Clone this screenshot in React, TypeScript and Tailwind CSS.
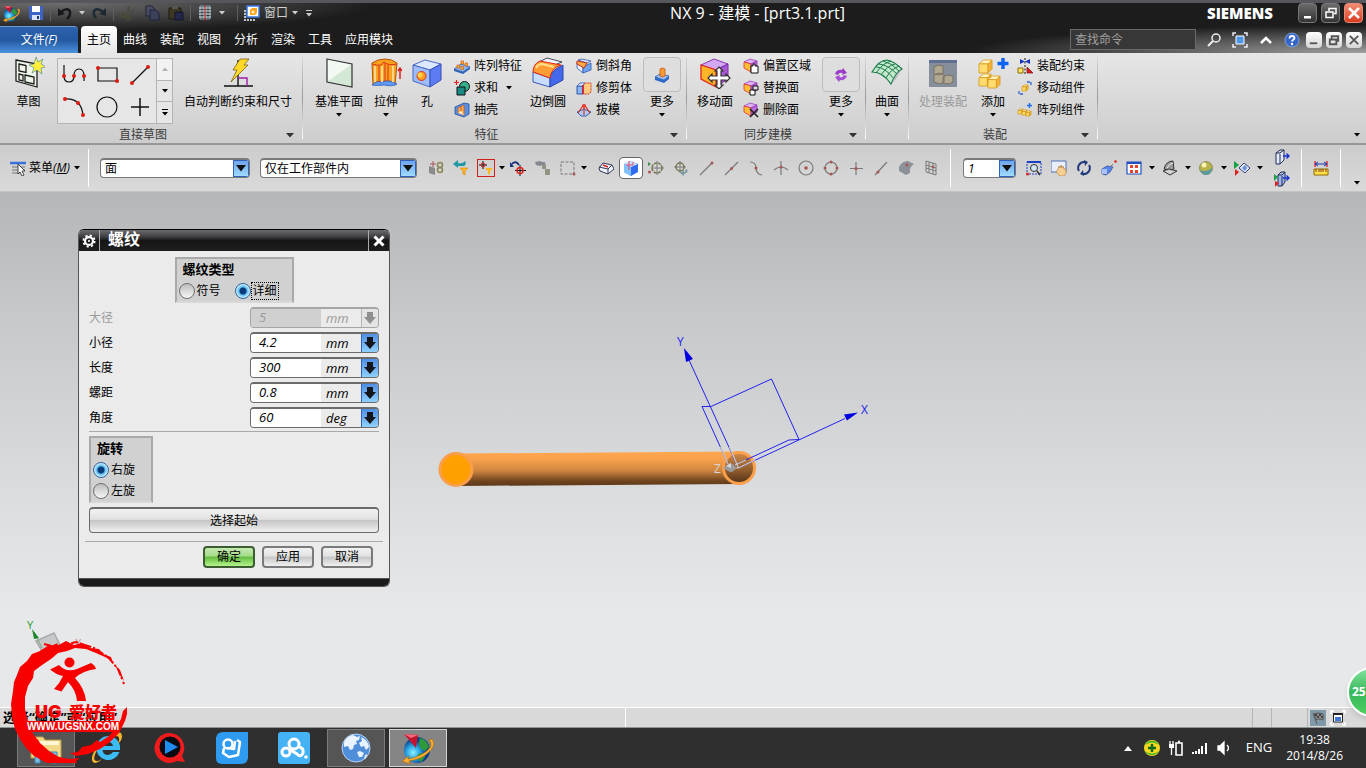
import React, { useState } from 'react';

type IconProps = { children: React.ReactNode; size?: number; box?: number; className?: string };

const Icon = ({ children, size = 16, box = 16, className = '' }: IconProps) => (
  <svg width={size} height={size} viewBox={`0 0 ${box} ${box}`} fill="none" className={`shrink-0 ${className}`} aria-hidden="true">
    {children}
  </svg>
);

const Caret = ({ className = 'text-black' }: { className?: string }) => (
  <svg width="6" height="4" viewBox="0 0 6 4" className={`shrink-0 ${className}`} aria-hidden="true">
    <path d="M0 0h6L3 3.5z" fill="currentColor" />
  </svg>
);

const FooterCaret = () => (
  <svg width="8" height="5" viewBox="0 0 8 5" className="shrink-0" aria-hidden="true">
    <path d="M0 0h8L4 4.5z" fill="#333" />
  </svg>
);

/* ---------- shared drawings ---------- */

const NxLogo = ({ size }: { size: number }) => (
  <Icon size={size} box={32}>
    <defs>
      <radialGradient id="nxGlobe" cx="0.35" cy="0.6">
        <stop offset="0" stopColor="#8ff0ff" />
        <stop offset="0.5" stopColor="#2aa6e4" />
        <stop offset="1" stopColor="#0a3e8c" />
      </radialGradient>
    </defs>
    <circle cx="15" cy="18" r="13" fill="url(#nxGlobe)" />
    <path d="M18 6q7 2 9 9l-4 4-5-3-1-5zM16 22l5-1 2 4-4 5-3-3z" fill="#2f9a3c" />
    <path d="M27 8q6 6-5 13-8 5-16 6l1-3-7 5 8 3-1-3q13-2 19-8 9-8 4-14z" fill="#fbb034" stroke="#a85f00" strokeWidth="0.6" />
    <path d="M2 2l14 1-2 13z" fill="#c3142d" />
    <path d="M2 2l14 1-7 3z" fill="#f46a7c" />
  </Icon>
);

const FaceCube = ({ extra }: { extra: React.ReactNode }) => (
  <Icon>
    <path d="M1 4l6-3 7 2-6 3z" fill="#dcb4f4" stroke="#9a3fc0" strokeWidth="0.8" />
    <path d="M1 4l7 2v8l-7-4z" fill="#ffbe33" stroke="#e0302c" strokeWidth="0.8" />
    <path d="M8 6l6-3v7l-6 4z" fill="#b868dc" stroke="#8a35b0" strokeWidth="0.8" />
    {extra}
  </Icon>
);

const GoldCube = ({ x, y, s }: { x: number; y: number; s: number }) => (
  <g stroke="#d59a1c" strokeWidth="0.8" strokeLinejoin="round">
    <path d={`M${x} ${y + s * 0.3}l${s * 0.35} ${-s * 0.3}h${s * 0.65}l${-s * 0.3} ${s * 0.3}z`} fill="#fff2bd" />
    <path d={`M${x} ${y + s * 0.3}h${s * 0.7}v${s * 0.7}h${-s * 0.7}z`} fill="#ffdc70" />
    <path d={`M${x + s * 0.7} ${y + s * 0.3}l${s * 0.3} ${-s * 0.3}v${s * 0.7}l${-s * 0.3} ${s * 0.3}z`} fill="#f2b23c" />
  </g>
);

const RedDot = ({ x, y, r = 2 }: { x: number; y: number; r?: number }) => <circle cx={x} cy={y} r={r} fill="#dd1c14" />;

/* ---------- title bar ---------- */

const BarLine = () => <span className="mx-1.5 h-4 w-px shrink-0 bg-[#5e5e5e]" />;

const QuickButton = ({ label, children }: { label: string; children: React.ReactNode }) => (
  <button type="button" aria-label={label} className="flex h-5 w-4 items-center justify-center">
    {children}
  </button>
);

const QuickAccess = () => (
  <div className="flex items-center pl-[3px] text-[#cfcfcf]">
    <NxLogo size={17} />
    <div className="ml-2 flex items-center">
      <QuickButton label="保存">
        <Icon>
          <path d="M1 1h14v14H3l-2-2z" fill="#3d63c4" />
          <path d="M4 1h8v6H4z" fill="#fff" />
          <path d="M4 10h8v5H4z" fill="#d9e2f8" />
          <path d="M9 11h2v3H9z" fill="#22386f" />
        </Icon>
      </QuickButton>
      <BarLine />
      <QuickButton label="撤消">
        <Icon>
          <path d="M4 7q5-4 8-2 3 4-2 9" stroke="#16181d" strokeWidth="2.500" />
          <path d="M1 3v8l7-2z" fill="#16181d" />
        </Icon>
      </QuickButton>
      <span className="mx-1.5"><Caret className="text-[#cfcfcf]" /></span>
      <QuickButton label="重做">
        <Icon>
          <path d="M12 7q-5-4-8-2-3 3 1 8" stroke="#1d2a33" strokeWidth="2.500" />
          <path d="M15 3v8l-7-2z" fill="#1d2a33" />
        </Icon>
      </QuickButton>
      <BarLine />
      <QuickButton label="剪切">
        <Icon>
          <path d="M9 1L7 11M15 5L3 10" stroke="#4b4a44" strokeWidth="2" />
          <circle cx="3" cy="10" r="2" stroke="#4b4a35" strokeWidth="1.5" />
          <circle cx="8" cy="13" r="2" stroke="#4b4a35" strokeWidth="1.5" />
        </Icon>
      </QuickButton>
      <span className="w-2" />
      <QuickButton label="复制">
        <Icon>
          <path d="M2 1h6l2 2v8H2z" fill="#4a4e5e" stroke="#20233a" />
          <path d="M6 5h6l3 3v7H6z" fill="#3c415a" stroke="#1d2040" />
        </Icon>
      </QuickButton>
      <span className="w-2" />
      <QuickButton label="粘贴">
        <Icon>
          <path d="M1 3h12v11H1z" fill="#3c3720" stroke="#1b1a12" />
          <path d="M4 1h6v3H4z" fill="#555" />
          <path d="M7 7h8v8H7z" fill="#23274a" stroke="#12142c" />
        </Icon>
      </QuickButton>
      <BarLine />
      <QuickButton label="书签">
        <Icon>
          <path d="M3 1h4v13H3zM9 1h4v13H9z" stroke="#7fa3b8" />
          <path d="M2 3h12M2 6h12M2 9h12M2 12h12" stroke="#dfe9ef" strokeWidth="1.200" />
          <path d="M8 0v16" stroke="#d7261e" />
        </Icon>
      </QuickButton>
      <span className="mx-1.5"><Caret className="text-[#cfcfcf]" /></span>
      <BarLine />
      <button type="button" className="flex items-center gap-1 text-xs text-[#cfcfcf]">
        <Icon>
          <path d="M1 5v10h11" stroke="#b9c3d2" strokeWidth="2" strokeDasharray="2 1" />
          <path d="M3 1h12v11H3z" fill="#fff" stroke="#3f78e0" strokeWidth="1.5" />
          <path d="M6 5l2-2h5v5l-2 2H6z" fill="#ffa51f" />
          <circle cx="9" cy="7" r="1.5" fill="#fff2bd" />
        </Icon>
        窗口
        <Caret className="text-[#cfcfcf]" />
      </button>
      <button type="button" aria-label="自定义快速访问" className="ml-2 flex flex-col items-center gap-0.5">
        <span className="h-px w-1.5 bg-[#cfcfcf]" />
        <Caret className="text-[#cfcfcf]" />
      </button>
    </div>
  </div>
);

const WindowButtons = () => (
  <div className="flex gap-1 pr-[3px]">
    <button type="button" aria-label="最小化" className="flex h-5 w-[19px] items-center justify-center rounded-sm border border-[#777] bg-gradient-to-b from-[#6b6b6b] to-[#343434]">
      <Icon><path d="M4 11h7v2.500H4z" fill="#fff" /></Icon>
    </button>
    <button type="button" aria-label="还原" className="flex h-5 w-[19px] items-center justify-center rounded-sm border border-[#777] bg-gradient-to-b from-[#6b6b6b] to-[#343434]">
      <Icon>
        <path d="M6 6V3.500h7v5h-2" stroke="#fff" strokeWidth="1.5" />
        <path d="M3 7h7v5.500H3z" stroke="#fff" strokeWidth="1.5" />
      </Icon>
    </button>
    <button type="button" aria-label="关闭" className="flex h-5 w-[19px] items-center justify-center rounded-sm border border-[#e78b79] bg-gradient-to-b from-[#f28b73] to-[#d93a1b]">
      <Icon><path d="M3 3l10 10M13 3L3 13" stroke="#fff" strokeWidth="2.5" /></Icon>
    </button>
  </div>
);

const tabs = ['曲线', '装配', '视图', '分析', '渲染', '工具', '应用模块'];

const TabRow = () => (
  <div className="flex h-[27px] items-stretch justify-between text-xs text-white">
    <nav className="flex items-stretch">
      <button type="button" className="w-[78px] rounded-tr-sm border-t border-[#6d9bd0] bg-gradient-to-b from-[#2c62ad] via-[#2458a0] to-[#4b93de]">
        文件<i>(F)</i>
      </button>
      <button type="button" className="ml-[3px] rounded-t-sm bg-gradient-to-b from-white to-[#e6e6e6] px-1.5 text-black">主页</button>
      <div className="flex gap-[13px] pl-1.5">
        {tabs.map((tab) => (
          <button type="button" key={tab}>{tab}</button>
        ))}
      </div>
    </nav>
    <div className="flex items-center pr-1">
      <input
        aria-label="查找命令"
        placeholder="查找命令"
        className="h-[21px] w-[126px] border border-[#6a6a6a] bg-[#373737] px-1 text-xs text-white placeholder:text-[#a0a0a0]"
      />
      <div className="ml-2.5 mr-1.5 flex gap-2.5">
        <button type="button" aria-label="搜索">
          <Icon>
            <circle cx="10" cy="6" r="4" stroke="#eee" strokeWidth="1.5" />
            <path d="M7 9l-5 5" stroke="#eee" strokeWidth="2" />
          </Icon>
        </button>
        <button type="button" aria-label="全屏">
          <Icon>
            <path d="M1 4V1h3M12 1h3v3M15 12v3h-3M4 15H1v-3" stroke="#eee" strokeWidth="1.5" />
            <path d="M4 4h8v8H4z" fill="#4b97ea" stroke="#fff" />
          </Icon>
        </button>
        <button type="button" aria-label="折叠功能区">
          <Icon><path d="M3 11l5-5 5 5" stroke="#fff" strokeWidth="2.5" /></Icon>
        </button>
        <button type="button" aria-label="帮助">
          <Icon>
            <circle cx="8" cy="8" r="7" fill="#3566c8" stroke="#8fb0ec" strokeWidth="0.8" />
            <path d="M5.500 6.500q0-2.500 2.500-2.500t2.500 2q0 1-1.500 2-1 .8-1 1.500" stroke="#fff" strokeWidth="1.800" />
            <circle cx="8" cy="12" r="1.200" fill="#fff" />
          </Icon>
        </button>
      </div>
      <div className="flex gap-1">
        {[
          { label: '最小化文档', d: 'M3 11h8' },
          { label: '还原文档', d: 'M5 6V3.500h7v5h-2M3 7h7v5H3z' },
          { label: '关闭文档', d: 'M3 3l9 9M12 3l-9 9' },
        ].map((b) => (
          <button type="button" key={b.label} aria-label={b.label} className="flex h-4 w-4 items-center justify-center rounded-sm bg-gradient-to-b from-white to-[#d5d5d5]">
            <Icon size={14} box={15}><path d={b.d} stroke="#555" strokeWidth="2" /></Icon>
          </button>
        ))}
      </div>
    </div>
  </div>
);

const TitleBar = () => (
  <header className="border-t-[3px] border-[#56575b] bg-[#1c1c1c] bg-[radial-gradient(320px_28px_at_60px_0px,#6e6e6e,transparent),radial-gradient(400px_28px_at_100%_100%,#a0a0a0,transparent)]">
    <div className="flex h-[23px] items-start">
      <QuickAccess />
      <h1 className="flex-1 pr-1 text-center text-base leading-5 text-white">NX 9 - 建模 - [prt3.1.prt]</h1>
      <span className="mr-[25px] font-['Open_Sans',sans-serif] text-[15px] font-extrabold leading-[21px] text-white">SIEMENS</span>
      <WindowButtons />
    </div>
    <TabRow />
  </header>
);

/* ---------- ribbon ---------- */

const Divider = () => <div className="my-1 w-px shrink-0 bg-gradient-to-b from-[#d8d8d8] via-[#999] to-white" />;

type GroupProps = { title?: string; children: React.ReactNode; className?: string };

const Group = ({ title, children, className = '' }: GroupProps) => (
  <section className="flex flex-col">
    <div className={`flex h-[74px] items-start ${className}`}>{children}</div>
    {title && (
      <div className="flex h-4 items-center pr-2 text-xs leading-4 text-[#3c3c3c]">
        <span className="flex-1 text-center">{title}</span>
        <FooterCaret />
      </div>
    )}
  </section>
);

type BigButtonProps = { label: string; width: string; caret?: boolean; disabled?: boolean; children: React.ReactNode };

const BigButton = ({ label, width, caret, disabled, children }: BigButtonProps) => (
  <button type="button" disabled={disabled} className={`flex shrink-0 flex-col items-center pt-1 text-xs leading-4 disabled:text-[#9a9a9a] ${width}`}>
    <span className="flex h-8 items-center justify-center">{children}</span>
    <span className="mt-[5px] whitespace-nowrap">{label}</span>
    {caret && <span className="mt-[3px]"><Caret /></span>}
  </button>
);

const MoreButton = ({ children }: { children: React.ReactNode }) => (
  <button type="button" className="ml-[11px] mr-[5px] flex w-[38px] flex-col items-center pt-1 text-xs leading-4">
    <span className="flex h-[35px] w-full items-center justify-center rounded-sm border border-[#bcbcbc] bg-[#dedede]">{children}</span>
    <span className="mt-0.5">更多</span>
    <span className="mt-[3px]"><Caret /></span>
  </button>
);

type SmallItem = { label: string; icon: React.ReactNode; caret?: boolean };

const SmallColumn = ({ items, className = '' }: { items: SmallItem[]; className?: string }) => (
  <div className={`flex flex-col pt-0.5 ${className}`}>
    {items.map((item) => (
      <button type="button" key={item.label} className="flex h-[22px] items-center gap-1 whitespace-nowrap text-xs">
        {item.icon}
        {item.label}
        {item.caret && <span className="ml-1"><Caret /></span>}
      </button>
    ))}
  </div>
);

const galleryIcons = [
  { label: '轮廓', art: <><path d="M3 3v11q0 6 5 6t5-6q0-7 5-7t5 7v5" stroke="#111" strokeWidth="1.200" /><RedDot x={3} y={14} /><RedDot x={13} y={14} /><RedDot x={23} y={14} /></> },
  { label: '矩形', art: <><path d="M4 6h19v13H4z" stroke="#111" strokeWidth="1.200" /><RedDot x={4} y={6} /><RedDot x={23} y={19} /></> },
  { label: '直线', art: <><path d="M5 21L21 5" stroke="#111" strokeWidth="1.200" /><RedDot x={5} y={21} /><RedDot x={21} y={5} /></> },
  { label: '圆弧', art: <><path d="M4 5q16-1 18 16" stroke="#111" strokeWidth="1.200" /><RedDot x={4} y={5} /><RedDot x={17} y={9} /><RedDot x={22} y={21} /></> },
  { label: '圆', art: <circle cx="13" cy="13" r="10" stroke="#111" strokeWidth="1.200" /> },
  { label: '点', art: <path d="M13 4v18M4 13h18" stroke="#111" strokeWidth="1.500" /> },
];

const SketchGallery = () => (
  <div className="mt-[5px] flex h-[66px] border border-[#b4b4b4] bg-[#e6e6e6]">
    <div className="grid w-[98px] grid-cols-3 grid-rows-2">
      {galleryIcons.map((g) => (
        <button type="button" key={g.label} aria-label={g.label} className="flex items-center justify-center">
          <Icon size={26} box={26}>{g.art}</Icon>
        </button>
      ))}
    </div>
    <div className="flex w-4 flex-col border-l border-[#b4b4b4]">
      <button type="button" aria-label="上一行" className="flex flex-1 items-center justify-center bg-[#f2f2f2]">
        <svg width="6" height="4" viewBox="0 0 6 4"><path d="M0 4h6L3 .5z" fill="#b0b0b0" /></svg>
      </button>
      <button type="button" aria-label="下一行" className="flex flex-1 items-center justify-center border-y border-[#b4b4b4]"><Caret /></button>
      <button type="button" aria-label="更多曲线" className="flex flex-1 flex-col items-center justify-center gap-0.5">
        <span className="h-px w-1.5 bg-black" />
        <Caret />
      </button>
    </div>
  </div>
);

const featureLeft: SmallItem[] = [
  {
    label: '阵列特征',
    icon: (
      <Icon>
        <path d="M0 11l7-5 9 3-7 5z" fill="#8db8f0" stroke="#1f4ea0" strokeWidth="0.7" />
        <path d="M0 11v2l9 3 7-5V9l-7 5z" fill="#2e62b8" />
        <path d="M3 7h2.500v3H3zM7 8.500h2.500v3H7zM7 3h2.500v3H7zM11 5h2.500v3H11z" fill="#ffab3a" stroke="#c65e10" strokeWidth="0.7" />
      </Icon>
    ),
  },
  {
    label: '求和',
    caret: true,
    icon: (
      <Icon>
        <circle cx="10.500" cy="6.500" r="5" fill="#35b08c" stroke="#111" />
        <path d="M3 7h8v8H3z" fill="#1a8a84" stroke="#111" />
        <path d="M0 2.500h5M2.500 0v5" stroke="#e0201c" strokeWidth="1.200" />
      </Icon>
    ),
  },
  {
    label: '抽壳',
    icon: (
      <Icon>
        <path d="M1 5l9-4 5 1v10l-5 3-9-3z" fill="#5a8fe0" stroke="#24509e" strokeWidth="0.8" />
        <path d="M4 6l6-3v10l-6-2z" fill="#ffb054" stroke="#c55a20" strokeWidth="0.8" />
        <path d="M4 11l3-2 3 4z" fill="#f6efe0" />
        <path d="M7 5v4" stroke="#c55a20" />
      </Icon>
    ),
  },
];

const featureRight: SmallItem[] = [
  {
    label: '倒斜角',
    icon: (
      <Icon>
        <path d="M1 4v6l6 5V9z" fill="#eaf1ff" stroke="#2e55b0" strokeWidth="0.8" />
        <path d="M7 9l8-4v7l-8 3z" fill="#6ea4ee" stroke="#2e55b0" strokeWidth="0.8" />
        <path d="M2 2l4-1 9 2-4 2z" fill="#dbe8ff" stroke="#2e55b0" strokeWidth="0.8" />
        <path d="M1 3l10 2-3 5-7-4z" fill="#ffae43" stroke="#cc2a1c" />
      </Icon>
    ),
  },
  {
    label: '修剪体',
    icon: (
      <Icon>
        <path d="M1 6h6v8H1z" fill="#8db6f5" stroke="#2e55b0" />
        <path d="M1 6l3-3h5L7 6z" fill="#dbe8ff" stroke="#2e55b0" strokeWidth="0.8" />
        <path d="M7 6l2-3h6v9l-2 2H7z" fill="#ffc980" stroke="#d33a20" strokeDasharray="2 1" />
        <path d="M7 5v9" stroke="#c8102e" strokeWidth="1.500" />
      </Icon>
    ),
  },
  {
    label: '拔模',
    icon: (
      <Icon>
        <path d="M1 10l7-3 7 3-5 4H5z" fill="#aecaf7" stroke="#3260b4" />
        <path d="M8 2L2 11M8 2l6 9M8 2v11" stroke="#d9321e" strokeWidth="1.200" />
        <circle cx="8" cy="4" r="2" fill="#e7443a" />
      </Icon>
    ),
  },
];

const syncItems: SmallItem[] = [
  { label: '偏置区域', icon: <FaceCube extra={<path d="M8 8h2V6h2v2h3v7H8z" fill="#fff" stroke="#111" />} /> },
  { label: '替换面', icon: <FaceCube extra={<><path d="M7 10h5v5H7z" fill="#fff" stroke="#111" /><path d="M10 6h5v4h-5z" fill="#ddd" stroke="#111" /></>} /> },
  { label: '删除面', icon: <FaceCube extra={<path d="M7 7l8 8M15 7l-8 8" stroke="#222" strokeWidth="1.600" />} /> },
];

const assemblyItems: SmallItem[] = [
  {
    label: '装配约束',
    icon: (
      <Icon>
        <path d="M3 1l5 2.500L3 6zM13 1L8 3.500 13 6z" fill="#1a35c4" />
        <path d="M8 0v16" stroke="#111" strokeDasharray="2 1.500" />
        <path d="M1 10h5v5H1z" fill="#ffe36b" stroke="#8a6a00" />
        <path d="M10 9v6h6z" fill="#d81e1e" stroke="#7a0f0f" strokeWidth="0.700" />
      </Icon>
    ),
  },
  {
    label: '移动组件',
    icon: (
      <Icon>
        <GoldCube x={5} y={5} s={6} />
        <path d="M10 2h4v4M6 14H2v-4" stroke="#2f66c8" strokeWidth="1.300" strokeDasharray="3 1" />
      </Icon>
    ),
  },
  {
    label: '阵列组件',
    icon: (
      <Icon>
        <GoldCube x={1} y={7} s={5} />
        <GoldCube x={5} y={8} s={5} />
        <GoldCube x={9} y={9} s={5} />
        <path d="M12.500 1v5M10 3.500h5" stroke="#1f6de8" strokeWidth="1.400" />
      </Icon>
    ),
  },
];

const Ribbon = () => (
  <div className="flex items-stretch justify-between border-b-2 border-[#989898] bg-gradient-to-b from-[#e6e6e6] to-[#cdcdcd]">
    <div className="flex">
      <Group title="直接草图">
        <BigButton label="草图" width="w-[57px]">
          <Icon size={32} box={32}>
            <path d="M3 3l21 4v23L3 24z" fill="#eef6ea" stroke="#1c1c1c" strokeWidth="1.300" />
            <path d="M6 7l7 1.500v7L6 14zM6 17l4 1v6l-4-1zM12 18l9 2v7l-9-2z" stroke="#1c1c1c" strokeWidth="1.300" />
            <path d="M23 0l2 5 5-3-2 5 5 3-5 1 1 6-5-4-5 3 2-5-5-3 5-1z" fill="#ffee3a" stroke="#3a7ea0" strokeWidth="0.600" />
          </Icon>
        </BigButton>
        <SketchGallery />
        <div className="w-[11px]" />
        <BigButton label="自动判断约束和尺寸" width="w-[108px]">
          <Icon size={32} box={32}>
            <path d="M2 29h29M16 3v26" stroke="#111" strokeWidth="1.400" />
            <path d="M16 21h9v8" stroke="#a11aa8" strokeWidth="1.400" />
            <path d="M18 2h9l-5 6h4L9 25l6-12h-4z" fill="#ffd927" stroke="#7c6010" strokeWidth="0.800" />
          </Icon>
        </BigButton>
        <div className="w-2.5" />
      </Group>
      <Divider />

      <Group title="特征" className="pl-[9px]">
        <BigButton label="基准平面" width="w-[54px]" caret>
          <Icon size={32} box={32}>
            <path d="M4 2l25 5v23L4 25z" fill="#f2f8f2" />
            <path d="M29 7v23L4 25z" fill="#d3e9d6" />
            <path d="M4 2l25 5v23L4 25z" stroke="#333" strokeWidth="1.200" />
          </Icon>
        </BigButton>
        <BigButton label="拉伸" width="w-10" caret>
          <Icon size={32} box={32}>
            <path d="M2 6q6-4 13-4t12 4l-2 22q-5-5-10-4-6 0-12 4z" fill="#f7a11f" stroke="#b6540b" />
            <path d="M2 28q5-5 10-3 8-3 15 2-4 3-13 1-7 1-12 0z" fill="#5f9af0" stroke="#1f55b8" strokeWidth="0.700" />
            <path d="M2 7q5 2 9 1l3-3q4 4 13 2" stroke="#d9301c" />
            <path d="M5 9v16M12 9v16M23 9v16" stroke="#ffd58a" strokeWidth="2" />
            <path d="M9 9v16M15 6v18M18 8v16" stroke="#d9301c" />
            <path d="M30 22V12M28 14l2-3 2 3" stroke="#e0201c" strokeWidth="1.500" />
          </Icon>
        </BigButton>
        <BigButton label="孔" width="w-[42px]">
          <Icon size={32} box={32}>
            <path d="M2 8l12-5 16 4-11 6z" fill="#dce8ff" stroke="#4a68c4" />
            <path d="M2 8l17 5v17L2 24z" fill="#9dbcf8" stroke="#4a68c4" />
            <path d="M19 13l11-6v16l-11 7z" fill="#5d7cf4" stroke="#3250b8" />
            <circle cx="10.500" cy="19" r="4.500" fill="#ff9b1f" stroke="#d9301c" />
            <circle cx="9" cy="18" r="2.500" fill="#ffd34d" />
          </Icon>
        </BigButton>
        <SmallColumn items={featureLeft} className="ml-1.5 w-[66px]" />
        <BigButton label="边倒圆" width="w-14">
          <Icon size={32} box={32}>
            <path d="M1 15l17 6v9L1 25z" fill="#c8dcfc" stroke="#3758b8" />
            <path d="M18 21q0-7 13-13v15l-13 7z" fill="#4468ec" stroke="#2a46a8" />
            <path d="M7 5l8-4 15 4-10 4z" fill="#f0f5ff" stroke="#223" strokeWidth="0.800" />
            <path d="M1 15Q1 7 8 4l21 4q-10 3-11 13z" fill="#ff9c33" stroke="#e0261c" />
            <path d="M4 11q2-4 6-4l12 3" stroke="#ffe08a" strokeWidth="2" />
          </Icon>
        </BigButton>
        <SmallColumn items={featureRight} />
        <MoreButton>
          <Icon>
            <path d="M1 10l5-3 9 2-5 4z" fill="#9fc2f4" stroke="#2a5cb0" strokeWidth="0.800" />
            <path d="M1 10v3l9 3 5-4V9l-5 4z" fill="#2f69c8" />
            <path d="M6 2q2-2 5 0v7q-2 2-5 0z" fill="#ff9a35" stroke="#c55a10" strokeWidth="0.800" />
          </Icon>
        </MoreButton>
      </Group>
      <Divider />

      <Group title="同步建模">
        <BigButton label="移动面" width="w-14">
          <Icon size={32} box={32}>
            <path d="M2 8l13-6 14 5-12 6z" fill="#d3a8f2" stroke="#8a35b0" />
            <path d="M17 13l12-6v15l-12 8z" fill="#a85ad6" stroke="#7a2aa4" />
            <path d="M2 8l15 5v17L2 22z" fill="#ffb526" stroke="#e0281c" strokeWidth="1.300" />
            <path d="M20 10l4 4h-2v5h5v-2l4 4-4 4v-2h-5v5h2l-4 4-4-4h2v-5h-5v2l-4-4 4-4v2h5v-5h-2z" fill="#fff" stroke="#333" strokeWidth="1.200" />
          </Icon>
        </BigButton>
        <SmallColumn items={syncItems} />
        <MoreButton>
          <Icon>
            <path d="M2 7q2-5 7-4l1-2 4 5-5 2 .5-2Q6 5 5 8z" fill="#9a3cc8" />
            <path d="M14 9q-2 5-7 4l-1 2-4-5 5-2-.5 2q3.500 1 4.500-2z" fill="#a84fd4" />
          </Icon>
        </MoreButton>
      </Group>
      <Divider />

      <Group>
        <BigButton label="曲面" width="w-[42px]" caret>
          <Icon size={32} box={32}>
            <path d="M1 15Q8 3 16 3q8 2 15 9-6 3-11 15Q12 15 1 15z" fill="#c5e8cf" stroke="#1b7d4a" strokeWidth="1.200" />
            <path d="M5 10q9 0 18 12M8 7q9 1 18 10M12 4q9 2 16 10M5 16Q12 6 20 4M10 18Q16 9 24 7M15 21q5-9 13-12" stroke="#1b7d4a" />
            <path d="M20 27q4-10 11-15l-6 10z" fill="#9a9a9a" opacity="0.500" />
          </Icon>
        </BigButton>
      </Group>
      <Divider />

      <Group title="装配">
        <BigButton label="处理装配" width="w-[68px]" disabled>
          <Icon size={32} box={32}>
            <path d="M2 3h28v27H2z" fill="#868d9b" />
            <path d="M2 3h28v3H2z" fill="#5f6f93" />
            <g fill="#b0a891" stroke="#777166">
              <path d="M7 10l4-2 5 1v7l-4 2-5-1zM7 18l5-2 5 2v7l-4 2-6-2zM16 20l4-2 6 1v6l-4 2-6-1z" />
            </g>
          </Icon>
        </BigButton>
        <BigButton label="添加" width="w-8" caret>
          <Icon size={32} box={32}>
            <GoldCube x={2} y={3} s={13} />
            <GoldCube x={2} y={17} s={12} />
            <GoldCube x={11} y={19} s={12} />
            <path d="M26 1v11M20.500 6.500h11" stroke="#0f63f0" strokeWidth="3.500" />
          </Icon>
        </BigButton>
        <SmallColumn items={assemblyItems} className="mx-2" />
        <div className="w-1" />
      </Group>
      <Divider />
    </div>
    <div className="flex items-end pb-1.5 pr-1.5"><Caret /></div>
  </div>
);

/* ---------- selection toolbar ---------- */

const Tool = ({ label, children, className = '' }: { label: string; children: React.ReactNode; className?: string }) => (
  <button type="button" aria-label={label} className={`flex h-[22px] w-6 shrink-0 items-center justify-center ${className}`}>
    <Icon>{children}</Icon>
  </button>
);

const Picker = ({ label, options, className = '' }: { label: string; options: string[]; className?: string }) => (
  <div className={`flex h-5 shrink-0 overflow-hidden rounded-sm border border-t-2 border-[#7a7a7a] bg-white ${className}`}>
    <select aria-label={label} className="peer w-0 flex-1 appearance-none pl-1 text-xs leading-4 outline-none">
      {options.map((o) => <option key={o}>{o}</option>)}
    </select>
    <span className="pointer-events-none flex w-4 items-center justify-center border border-[#2f62b8] bg-gradient-to-b from-[#6fa4ea] to-[#9fdcff]">
      <svg width="10" height="7" viewBox="0 0 10 7"><path d="M0 0h10L5 6.500z" fill="#111" /></svg>
    </span>
  </div>
);

const grey = '#7a7a7a';
const rose = '#a85555';

const SelectionBar = () => (
  <div className="flex h-[47px] items-center justify-between border-b border-[#c4c4c4] bg-gradient-to-b from-[#cccccc] to-[#dadada] text-xs">
    <div className="flex h-full items-center">
      <button type="button" className="flex items-center pl-2.5">
        <Icon>
          <path d="M0 3h16" stroke="#3b6fdc" strokeWidth="2.500" />
          <path d="M2 7h13M2 10h13M2 13h10" stroke="#777" strokeWidth="1.200" />
          <path d="M8 4v10l2-2 2 4 2-1-2-4h3z" fill="#fff" stroke="#333" strokeWidth="0.900" />
        </Icon>
        <span className="ml-[3px]">菜单<i>(<u>M</u>)</i></span>
        <span className="ml-1"><Caret /></span>
      </button>
      <div className="ml-2 mr-[11px] h-[38px] w-px bg-white" />
      <Picker label="类型过滤器" options={['面', '边', '体']} className="w-[150px]" />
      <Picker label="选择范围" options={['仅在工作部件内', '整个装配']} className="ml-2.5 w-[157px]" />

      <div className="ml-[7px] flex items-center gap-px">
        <Tool label="选择过滤">
          <path d="M1 6l6 2v7l-6-2z" fill="#8a8a8a" />
          <path d="M5 1v6M2 4h6" stroke={rose} />
          <circle cx="12" cy="5" r="2.500" stroke="#8a8658" strokeWidth="1.500" />
          <circle cx="12" cy="10" r="2.500" stroke="#8a8658" strokeWidth="1.500" />
        </Tool>
        <Tool label="重置过滤器">
          <path d="M5 0L0 4l5 4V6h6q3-2 1-5-2 3-7 2z" fill="#1f9aa2" />
          <path d="M7 8h8l-3 3v4l-2-1v-3z" fill="#ffb51c" stroke="#d98400" strokeWidth="0.600" />
        </Tool>
        <button type="button" aria-label="常规选择过滤器" className="flex h-[22px] w-6 items-center justify-center">
          <span className="border border-[#d0201c]">
            <Icon>
              <path d="M5 1v8M1 5h8" stroke="#111" />
              <circle cx="5" cy="5" r="2" stroke="#d0201c" />
              <path d="M7 8h8l-3 3v4l-2-1v-3z" fill="#ffb51c" />
            </Icon>
          </span>
        </button>
        <Caret />
        <Tool label="优先选择">
          <path d="M2 4q4-4 7 1" stroke="#1a2f7a" strokeWidth="1.800" />
          <path d="M0 2v5h4z" fill="#1a2f7a" />
          <path d="M10 5v11M5 10.500h11" stroke="#111" />
          <circle cx="10" cy="10.500" r="3" stroke="#e0201c" strokeWidth="1.500" />
        </Tool>
        <Tool label="向上一级">
          <path d="M0 2l5-1 2 1 3 0 1 4h-3l-1-1-2 1-4-1z" fill="#85888c" />
          <path d="M7 5h4v4H7zM10 9h5v6h-5z" fill="#8f9484" />
        </Tool>
        <Tool label="矩形选择">
          <path d="M1 2h13v12H1z" stroke="#777" strokeDasharray="3 1.500" />
          <circle cx="14" cy="14" r="1.500" fill={rose} />
        </Tool>
        <Caret />
        <Tool label="面规则" className="ml-1.5">
          <path d="M1 8l4-5 9 2 2 4-6 5-8-3z" fill="#eef3ff" stroke="#333a55" />
          <path d="M10 14V9l4-4M10 9L1 7" stroke="#333a55" />
          <path d="M5 5l5 2" stroke="#e0201c" strokeWidth="1.500" />
        </Tool>
        <button type="button" aria-label="着色显示" className="flex h-[22px] w-6 items-center justify-center rounded-sm border border-[#666] bg-white">
          <Icon>
            <path d="M1 4l7-3 7 3v8l-7 4-7-4z" fill="#2f6cf0" />
            <path d="M1 4l7 3v9l-7-4z" fill="#7fc4ff" />
            <path d="M1 4l7-3 7 3-7 3z" fill="#c9e6ff" />
            <path d="M6 1v9M3 5h7v-3" stroke="#e0466a" />
          </Icon>
        </button>
        <Tool label="启用捕捉点">
          <path d="M0 2l3 2-3 2z" fill="#3e8a4a" /><circle cx="1.500" cy="12" r="1.500" fill={rose} />
          <path d="M9 1v14M3 8h13" stroke={grey} /><circle cx="9" cy="8" r="5" stroke="#77754e" strokeWidth="1.500" strokeDasharray="3 1" />
        </Tool>
        <Tool label="清除捕捉点">
          <path d="M7 1v12M1 7h12" stroke={grey} /><circle cx="7" cy="7" r="4" stroke="#77754e" strokeWidth="1.500" />
          <path d="M14 9q2 4-3 5v2l-4-3 4-3v2q2 0 1-2z" fill="#7d9aa4" />
        </Tool>
        <Tool label="端点"><path d="M2 15L14 3" stroke={grey} strokeWidth="1.200" /><circle cx="14" cy="3" r="1.500" fill={rose} /></Tool>
        <Tool label="中点"><path d="M2 15L15 2" stroke={grey} strokeWidth="1.200" /><circle cx="8.500" cy="8.500" r="1.500" fill={rose} /></Tool>
        <Tool label="控制点"><path d="M2 2q6 0 6 6t6 7" stroke={grey} strokeWidth="1.200" /><circle cx="8" cy="8" r="1.500" fill={rose} /></Tool>
        <Tool label="交点"><path d="M8 1v14M1 10q7-6 14 0" stroke={grey} strokeWidth="1.200" /><circle cx="8" cy="7" r="1.500" fill={rose} /></Tool>
        <Tool label="圆心"><circle cx="8" cy="8" r="7" stroke={grey} strokeWidth="1.200" /><circle cx="8" cy="8" r="1.800" fill={rose} /></Tool>
        <Tool label="象限点">
          <circle cx="8" cy="8" r="6" stroke={grey} strokeWidth="1.200" />
          <circle cx="8" cy="2" r="1.500" fill={rose} /><circle cx="8" cy="14" r="1.500" fill={rose} />
          <circle cx="2" cy="8" r="1.500" fill={rose} /><circle cx="14" cy="8" r="1.500" fill={rose} />
        </Tool>
        <Tool label="现有点"><path d="M8 2v13M2 8.500h13" stroke={grey} strokeWidth="1.200" /><circle cx="8" cy="8.500" r="1.500" fill={rose} /></Tool>
        <Tool label="曲线上的点"><path d="M2 15L14 2" stroke={grey} strokeWidth="1.200" /><circle cx="5" cy="12" r="1.500" fill={rose} /></Tool>
        <Tool label="面上的点">
          <path d="M1 7q3-6 9-6l6 3q-5 3-4 9l-4 2-7-4z" fill="#8d9298" />
          <circle cx="9" cy="5" r="1.500" fill={rose} />
        </Tool>
        <Tool label="有界栅格点">
          <path d="M3 1l10 3v11L3 12zM3 5l10 3M3 8l10 3M6 2v11M10 3v11" stroke={grey} />
          <circle cx="10" cy="7" r="1.300" fill={rose} />
        </Tool>
      </div>
      <div className="ml-[7px] mr-3 h-[38px] w-px bg-white" />

      <Picker label="工作图层" options={['1', '2', '3']} className="w-[53px] italic" />
      <div className="ml-1.5 flex items-center">
        <div className="flex gap-px">
          <Tool label="缩放至选择">
            <path d="M1 2h14v12H1z" stroke="#1a3fc8" strokeDasharray="2 1" /><path d="M1 2h14" stroke="#1a3fc8" strokeWidth="2" />
            <circle cx="8" cy="8" r="3.500" fill="#cfe6f6" stroke="#333" /><path d="M11 11l3 4" stroke="#333" strokeWidth="1.500" />
            <circle cx="1.500" cy="14" r="1.500" fill="#e0201c" />
          </Tool>
          <Tool label="平移">
            <path d="M0 1h15v11H0z" fill="#e8eefb" stroke="#4e6fb4" />
            <path d="M7 9l1-3 1 2 1-3 1 3 1-2 1 3 2 0v4l-2 3h-4l-4-4z" fill="#f7cf94" stroke="#a9742f" strokeWidth="0.600" />
          </Tool>
          <Tool label="旋转">
            <path d="M3 11a6 6 0 0 1 6-9M13 5a6 6 0 0 1-6 9" stroke="#1f3a78" strokeWidth="2" />
            <path d="M8 0l4 2-3 4zM8 16l-4-2 3-4z" fill="#1f3a78" />
          </Tool>
          <Tool label="透视">
            <path d="M1 9l5-3 6 1-3 5-4 3-4-1z" fill="#5a86ea" stroke="#2446a0" strokeWidth="0.700" />
            <path d="M1 9h5v5H1z" fill="#a9c2fa" /><path d="M9 7l3-3" stroke="#777" /><circle cx="14.500" cy="1.500" r="1.300" fill="#e0201c" />
          </Tool>
          <Tool label="适合窗口">
            <path d="M1 2h14v12H1z" fill="#fff" stroke="#1f4fc0" strokeWidth="1.200" /><path d="M1 3h14" stroke="#1f4fc0" strokeWidth="2" />
            <path d="M4 5h3v3H4zM9 5h3v3H9zM4 10h3v3H4zM9 10h3v3H9z" fill="#e8402c" />
          </Tool>
        </div>
        <span className="flex w-3 justify-center"><Caret /></span>
        <Tool label="定向视图">
          <path d="M2 9Q4 1 11 1l1 8-5 2z" fill="#9a9a9a" stroke="#333" />
          <path d="M1 11l6-2 8 2-7 4z" fill="#d0d0d0" stroke="#333" /><path d="M5 8q2-4 6-5" stroke="#eee" />
        </Tool>
        <span className="flex w-3 justify-center"><Caret /></span>
        <Tool label="真实着色">
          <circle cx="8" cy="8" r="6.500" fill="#b9b24a" stroke="#75794a" strokeWidth="0.700" />
          <path d="M2 10q6 3 12-2 0 7-6 7-4 0-6-5z" fill="#5d9aa0" /><circle cx="6" cy="5" r="2.500" fill="#f6f3b8" />
        </Tool>
        <span className="flex w-3 justify-center"><Caret /></span>
        <Tool label="显示隐藏">
          <path d="M0 1l5 4-5 4z" fill="#17a044" /><path d="M1 9l4 3-4 4z" fill="#e0201c" />
          <path d="M5 8l5-5 6 5-5 5z" fill="#dfe7fa" stroke="#33447a" /><path d="M8 8l3-3 2 3-2 3z" fill="#6a8ed8" />
        </Tool>
        <span className="flex w-3 justify-center"><Caret /></span>
        <div className="ml-1 flex flex-col">
          <Tool label="剪切截面">
            <path d="M2 4l4-3h4v10l-4 4H2zM6 5v10M2 4h4l4-3" fill="#e2eafc" stroke="#222c55" /><path d="M9 7h6M12.500 4.500L15 7l-2.500 2.500" stroke="#1530d0" strokeWidth="1.400" />
          </Tool>
          <Tool label="编辑截面">
            <path d="M4 4l3-3h4v10l-3 4H4zM8 5v10M4 4h4l3-3" fill="#9fb6ee" stroke="#222c55" /><path d="M9 7h6M12.500 4.500L15 7l-2.500 2.500" stroke="#1530d0" strokeWidth="1.400" />
            <path d="M0 3l4 3-4 4z" fill="#17a044" /><path d="M1 10l4 2-4 4z" fill="#e0201c" />
          </Tool>
        </div>
      </div>
      <div className="ml-[7px] mr-[7px] h-[38px] w-px bg-white" />
      <Tool label="测量距离">
        <path d="M2 1v6M14 1v6" stroke="#e0201c" strokeWidth="1.300" /><path d="M2 4h12M5 2L2 4l3 2M11 2l3 2-3 2" stroke="#1530b0" />
        <path d="M1 9h14v6H1z" fill="#ffe14a" stroke="#8f6b00" /><path d="M3 9v3M6 9v3M8 9v3M10 9v3M13 9v3" stroke="#8a3a20" />
      </Tool>
      <div className="ml-[7px] h-[38px] w-px bg-white" />
    </div>
    <div className="flex h-full items-end pb-1.5 pr-1.5"><Caret /></div>
  </div>
);

/* ---------- thread dialog ---------- */

const radioClass =
  'h-4 w-4 shrink-0 appearance-none rounded-full border border-[#6f6f6f] bg-gradient-to-b from-[#bdbdbd] to-[#f6f6f6] checked:border-[#2b5f9e] checked:bg-[radial-gradient(circle,#0b3a78_0,#0b3a78_3px,#55b8ee_4px,#d9f4ff_7px)]';

type RadioProps = { name: string; label: string; checked: boolean; focused?: boolean; onPick: () => void };

const Radio = ({ name, label, checked, focused, onPick }: RadioProps) => (
  <label className="flex h-[21px] items-center text-xs leading-4">
    <input type="radio" name={name} checked={checked} onChange={onPick} className={radioClass} />
    <span className={focused ? 'border border-dotted border-black px-px' : 'border border-transparent px-px'}>{label}</span>
  </label>
);

type Param = { id: string; label: string; value: string; unit: string; disabled?: boolean };

const params: Param[] = [
  { id: 'major', label: '大径', value: '5', unit: 'mm', disabled: true },
  { id: 'minor', label: '小径', value: '4.2', unit: 'mm' },
  { id: 'length', label: '长度', value: '300', unit: 'mm' },
  { id: 'pitch', label: '螺距', value: '0.8', unit: 'mm' },
  { id: 'angle', label: '角度', value: '60', unit: 'deg' },
];

const ParamRow = ({ param }: { param: Param }) => {
  const off = param.disabled;
  return (
    <div className={`flex items-center justify-between text-xs ${off ? 'text-[#9b9b9b]' : 'text-black'}`}>
      <label htmlFor={param.id}>{param.label}</label>
      <div className={`flex h-[21px] w-[129px] overflow-hidden rounded-sm border border-t-2 text-[13px] italic leading-[18px] ${off ? 'border-[#a5a5a5]' : 'border-[#6b6b6b]'}`}>
        <input id={param.id} defaultValue={param.value} disabled={off} className={`w-0 flex-1 pb-0.5 pl-2 italic outline-none ${off ? 'bg-[#d0d0d0]' : 'bg-white'}`} />
        <span className="w-10 bg-[#ebebeb] pl-[5px]">{param.unit}</span>
        <button
          type="button"
          disabled={off}
          aria-label={`${param.label}选项`}
          className={`flex w-[17px] items-center justify-center border-l ${off ? 'border-[#b8b8b8] bg-[#e4e4e4]' : 'border-[#2f62b8] bg-gradient-to-b from-[#4f8fe4] to-[#8fd0ff]'}`}
        >
          <svg width="12" height="12" viewBox="0 0 12 12"><path d="M3 0h6v5h3l-6 7-6-7h3z" fill={off ? '#8f8f8f' : '#15151c'} /></svg>
        </button>
      </div>
    </div>
  );
};

const steel = 'bg-[linear-gradient(to_bottom,#f2f2f2_0,#e2e2e2_45%,#c6c6c6_50%,#f0f0f0_100%)]';
const green = 'bg-[linear-gradient(to_bottom,#c5eab2_0,#a3da88_45%,#63bb3f_50%,#b4f58c_100%)]';

const ThreadDialog = () => {
  const [kind, setKind] = useState('详细');
  const [turn, setTurn] = useState('右旋');

  return (
    <section role="dialog" aria-label="螺纹" className="absolute left-[78px] top-[37px] w-[312px] overflow-hidden rounded-md border border-[#555] border-t-black bg-[#ebebeb] text-xs text-black">
      <div className="flex h-[21px] items-stretch bg-[linear-gradient(to_bottom,#6b6c70_0,#3a3a3c_35%,#161616_50%,#1d1d1d_100%)] text-white">
        <button type="button" aria-label="对话框选项" className="flex w-[21px] items-center justify-center border-r border-[#aaa]">
          <Icon size={14}>
            <circle cx="8" cy="8" r="4.500" stroke="#fff" strokeWidth="2.500" />
            <circle cx="8" cy="8" r="6.500" stroke="#fff" strokeWidth="2" strokeDasharray="2.600 2.500" />
            <circle cx="8" cy="8" r="1.200" fill="#fff" />
          </Icon>
        </button>
        <h2 className="flex-1 pl-2 text-base font-bold leading-[18px]">螺纹</h2>
        <button type="button" aria-label="关闭对话框" className="flex w-[21px] items-center justify-center border-l border-[#aaa]">
          <Icon size={12}><path d="M2 2l12 12M14 2L2 14" stroke="#fff" strokeWidth="4" /></Icon>
        </button>
      </div>

      <div className="px-2.5 pt-1.5">
        <fieldset className="mx-auto w-[119px] border-2 border-[#a9a9a9] border-b-[#d8d8d8] bg-[#d1d1d1] pl-0.5">
          <legend className="float-left w-full pl-1 text-[13px] font-bold leading-[21px]">螺纹类型</legend>
          <div className="clear-both flex gap-3">
            {['符号', '详细'].map((k) => (
              <Radio key={k} name="kind" label={k} checked={kind === k} focused={k === '详细' && kind === k} onPick={() => setKind(k)} />
            ))}
          </div>
        </fieldset>

        <div className="mt-1 flex flex-col gap-1 border-b border-[#a9a9a9] pb-[3px]">
          {params.map((p) => <ParamRow key={p.id} param={p} />)}
        </div>

        <fieldset className="mt-1 w-16 border-2 border-[#a9a9a9] border-b-[#d8d8d8] bg-[#d1d1d1] pl-0.5">
          <legend className="float-left w-full pl-1 text-[13px] font-bold leading-[21px]">旋转</legend>
          <div className="clear-both">
            {['右旋', '左旋'].map((t) => (
              <Radio key={t} name="turn" label={t} checked={turn === t} onPick={() => setTurn(t)} />
            ))}
          </div>
        </fieldset>

        <button type="button" className={`mt-1 h-[26px] w-full rounded-sm border border-t-2 border-[#6b6b6b] ${steel}`}>选择起始</button>
      </div>

      <div className="mx-1.5 mt-2 border-t border-[#a9a9a9]" />
      <div className="flex justify-end gap-[7px] pb-2.5 pr-4 pt-1">
        <button type="button" className={`h-[22px] w-[52px] rounded-sm border-2 border-[#3c5c32] leading-[18px] ${green}`}>确定</button>
        <button type="button" className={`h-[22px] w-[52px] rounded-sm border-2 border-[#7a7a7a] leading-[18px] ${steel}`}>应用</button>
        <button type="button" className={`h-[22px] w-[52px] rounded-sm border-2 border-[#7a7a7a] leading-[18px] ${steel}`}>取消</button>
      </div>
      <div className="h-2 border-t border-[#555] bg-[#1a1a1a]" />
    </section>
  );
};

/* ---------- model view ---------- */

const Model = () => (
  <svg width="450" height="170" viewBox="430 330 450 170" fill="none" className="absolute left-[430px] top-[138px]" role="img" aria-label="圆柱模型">
    <defs>
      <linearGradient id="rod" x1="0" y1="0" x2="0" y2="1">
        <stop offset="0" stopColor="#ffa84f" />
        <stop offset="0.250" stopColor="#f79f4b" />
        <stop offset="0.550" stopColor="#cf8540" />
        <stop offset="0.850" stopColor="#70451f" />
        <stop offset="1" stopColor="#5c3818" />
      </linearGradient>
      <linearGradient id="bore" x1="0" y1="0" x2="0" y2="1">
        <stop offset="0" stopColor="#d08a48" />
        <stop offset="0.600" stopColor="#8c5a2c" />
        <stop offset="1" stopColor="#4f3116" />
      </linearGradient>
    </defs>
    <path d="M456 453.500L739 451.500V484L456 486z" fill="url(#rod)" />
    <circle cx="456" cy="469.500" r="16" fill="#ffa000" stroke="#f99e4c" strokeWidth="3" />
    <circle cx="739" cy="468" r="15.500" fill="url(#bore)" stroke="#fb9f4a" strokeWidth="3" />
    <g stroke="#2222ee">
      <path d="M738.500 468L689 360M738.500 468L845 418.500" />
      <path d="M711 406.500L771.500 379L799 439.500L789 440L735 465M711 406.500H702L728.500 465" />
    </g>
    <path d="M738.500 468L729.500 447M728.500 465L720.500 447M738.500 468L755 460M735 465L746 460M729 468h10" stroke="#d2cdc6" strokeWidth="1.200" />
    <path d="M684 348l9 11-7 3zM858 412.500l-14 2 3 6z" fill="#0000e0" />
    <path d="M723 468l7-4.500q4 0 6 4.500-2 4-6 4z" fill="#9b9b9b" />
    <path d="M726 466l5-3v5z" fill="#d8d8d8" />
    <g fontFamily="Open Sans, sans-serif" fontSize="12">
      <text x="677" y="346" fill="#2222ee">Y</text>
      <text x="861" y="414" fill="#2222ee">X</text>
      <text x="714" y="473" fill="#d6d6d6">Z</text>
    </g>
  </svg>
);

const Triad = () => (
  <svg width="70" height="50" viewBox="20 615 70 50" fill="none" className="absolute bottom-[42px] left-5" aria-hidden="true">
    <path d="M36 641l18-8 6 12-16 9z" fill="#c6c8c9" stroke="#aaa" strokeWidth="1.500" />
    <path d="M34 632l8 16" stroke="#7aa87a" />
    <path d="M32 629l7 9-5 1z" fill="#1c8a2c" />
    <text x="27" y="629" fontFamily="Open Sans, sans-serif" fontSize="11" fill="#1f9a34">Y</text>
    <text x="75" y="647" fontFamily="Open Sans, sans-serif" fontSize="11" fill="#c98a8a">X</text>
  </svg>
);

/* Red brush-stroke stamp lying over the status bar and the taskbar */
const Stamp = () => (
  <svg width="130" height="125" viewBox="5 638 130 125" fill="none" className="pointer-events-none absolute bottom-[5px] left-[5px]" role="img" aria-label="UG爱好者">
    {/* left and top sweep */}
    <path
      d="M124 681l-4-11-7-7-2-6-8-3-4-5-9-1-7-5-9 2-8-4-9 5-8-1-9 6-8 3-5 7-7 6-3 8-3 7-1 9-2 13 1 13 3 12 5 10 6 9 8 8 11 6 11 5 11 1 11-2-2-5 4-3-10 1-11-2-10-6-9-8-7-9-5-12-3-13 0-12 3-11 5-8 1-7 8-6 9-6 7-6 9-2 8-3 11 1 10 4 9 4 7 4 5 8 4 8z"
      fill="#f80000"
    />
    {/* lower right tail */}
    <path d="M127 707l-4 4-2 8-5 9-7 8-9 6-3-2-6 5-9 2-4 5-8 1 6 3 12-2 12-5 10-7 9-9 6-12 2-7z" fill="#f80000" />
    <path d="M44 644l12 3 20-5 18 6 14 9 10 12 6 15M18 683l-3 20 5 22 12 16" stroke="#f80000" strokeWidth="2" strokeDasharray="7 2 2 3" />
    <path d="M26 666l16-14 16-7M18 716l8 14 12 13" stroke="#f80000" strokeWidth="4" strokeDasharray="9 1" />
    <circle cx="69.500" cy="662.500" r="5" fill="#f80000" />
    <path d="M50 669.500L59 665Q66 673 77 669L91 663Q95 665 96 669Q82 671 75 678Q85 689 86 701H77Q76 690 68 682L61.500 691.500L54 689Q60 683 63 676Q57 675 50 669.500z" fill="#f80000" />
    <path d="M27 721h92v11H27z" fill="#f80000" />
    <text x="35" y="718" fontFamily="Inter, sans-serif" fontSize="18" fontWeight="900" fill="#f80000">UG</text>
    <text x="69" y="718" fontFamily="Noto Sans CJK SC, sans-serif" fontSize="16" fontWeight="900" fill="#f80000">爱好者</text>
    <text x="73" y="730" textAnchor="middle" fontFamily="Liberation Sans, sans-serif" fontSize="10" fontWeight="700" fill="#fff">WWW.UGSNX.COM</text>
  </svg>
);

const Viewport = () => (
  <main className="relative min-h-0 flex-1 bg-[linear-gradient(to_bottom,#b5b6b8_0,#c9cacb_27%,#dcddde_60%,#e6e8ea_82%)]">
    <Model />
    <Triad />
    <ThreadDialog />
    <div className="absolute bottom-[-10px] right-[-31px] z-10 flex h-[50px] w-[50px] items-center rounded-full border-2 border-white bg-gradient-to-b from-[#7fe39a] via-[#35b85c] to-[#4fcf5f] pl-[3px] text-xs font-bold text-white shadow-md">
      25
    </div>
  </main>
);

/* ---------- status bar and taskbar ---------- */

const StatusBar = () => (
  <footer className="flex h-[21px] items-stretch border-b border-t border-b-[#8d9390] border-t-white bg-[#d9d9d9] text-[13px] font-bold">
    <p className="flex-1 pl-[3px] leading-[18px]">选择“确定”或“应用”</p>
    <div className="flex flex-[1.19] justify-end border-l border-white">
      <span className="w-5 border-x border-[#b5b5b5]" />
      <span className="w-9 border-r border-[#b5b5b5]" />
      <div className="flex items-center gap-1 pl-0.5 pr-5">
        <Icon>
          <path d="M0 0h16v16H0z" fill="#7f99a8" />
          <path d="M3 3l4 11M4 4q4-2 9 0v6q-5-2-7 0z" stroke="#555" fill="#8a8a8a" />
          <path d="M5 4h2v2H5zM9 4h2v2H9zM7 6h2v2H7zM11 6h2v2h-2z" fill="#444" />
        </Icon>
        <Icon>
          <path d="M1 4V1h3M12 1h3v3M15 12v3h-3M4 15H1v-3" stroke="#fff" strokeWidth="1.500" />
          <path d="M3.500 4h9v8h-9z" fill="#fff" stroke="#222" /><path d="M5 7h6v4H5z" fill="#3b78d8" /><path d="M3 4h10" stroke="#222" strokeWidth="2" />
        </Icon>
      </div>
    </div>
  </footer>
);

const taskApps = [
  {
    label: '资源管理器',
    state: 'open',
    art: (
      <>
        <path d="M1 5h12l2 3h16v18H1z" fill="#f2d98a" stroke="#b99a48" />
        <path d="M3 9h26v4H3z" fill="#fff6d4" />
        <path d="M5 31V20h22v11h-5v-6H10v6z" fill="#79bfe4" stroke="#3f86b4" />
      </>
    ),
  },
  {
    label: 'Internet Explorer',
    state: 'idle',
    art: (
      <>
        <path d="M16 4a12 12 0 1 0 11.500 16H21q-2 3-5 3-5 0-5.500-5H28A12 12 0 0 0 16 4zm-5 10q1-4 5-4t5 4z" fill="#3cbcf4" />
        <path d="M29 1q3 5-3 11 3-8-2-8Q14 5 5 18-1 30 6 29q3-1 5-3-7 7-10 4-4-5 6-17Q22-3 29 1z" fill="#f5b62a" />
      </>
    ),
  },
  {
    label: '快播',
    state: 'idle',
    art: (
      <>
        <path d="M16 1a15 15 0 1 0 7 28l8 1-3-6A15 15 0 0 0 16 1z" fill="#ee1c1c" />
        <circle cx="16" cy="15" r="10.500" fill="#0a0a12" />
        <path d="M11 8l13 7-13 7z" fill="#1f8cf0" />
      </>
    ),
  },
  {
    label: '阅读器',
    state: 'idle',
    art: (
      <>
        <path d="M0 6Q1 0 7 0h25v26q-1 6-7 6H6q-6 0-6-6z" fill="#2f9bf0" />
        <circle cx="12" cy="12" r="4.500" stroke="#fff" strokeWidth="2.500" />
        <path d="M8 16l-1 5 6 4 9-2 2-13-3-2M19 9l-1 8-6-1" stroke="#fff" strokeWidth="2.500" strokeLinejoin="round" />
      </>
    ),
  },
  {
    label: '百度云',
    state: 'idle',
    art: (
      <>
        <path d="M0 3q0-3 3-3h26q3 0 3 3v26q0 3-3 3H3q-3 0-3-3z" fill="#45b2f6" />
        <circle cx="16" cy="12" r="5" stroke="#fff" strokeWidth="3" />
        <circle cx="8" cy="20" r="4" stroke="#fff" strokeWidth="3" />
        <path d="M11 17l8 5q4 4 6-1 1-5-4-6" stroke="#fff" strokeWidth="3" />
        <circle cx="28" cy="25" r="1.800" fill="#fff" />
      </>
    ),
  },
  {
    label: '浏览器',
    state: 'open',
    art: (
      <>
        <circle cx="16" cy="16" r="14" fill="#4f8ed8" stroke="#b9d6f6" />
        <path d="M4 10q3-6 9-7l4 2 3-1-1 4-3 1 1 3-3 1-1 4-3 1-2-4-4 1zM21 5q7 3 8 10l-3 3-2-4-3 1-2-4 3-2zM17 20l3-1 4 2-2 4-3 0zM25 23l2-1-1 4-2 1z" fill="#e8f3ff" />
      </>
    ),
  },
];

const Taskbar = () => (
  <div className="flex h-10 items-center justify-between bg-[#2f2f2f] text-xs text-white">
    <div className="flex gap-1 pl-[17px]">
      {taskApps.map((app) => (
        <button
          type="button"
          key={app.label}
          aria-label={app.label}
          className={`flex h-[38px] w-[58px] items-center justify-center border ${app.state === 'open' ? 'border-[#7c7c7c] bg-[#555]' : 'border-transparent'}`}
        >
          <Icon size={32} box={32}>{app.art}</Icon>
        </button>
      ))}
      <button type="button" aria-label="NX 9" className="flex h-[38px] w-[58px] items-center justify-center border border-[#d5d5d5] bg-[#858585]">
        <NxLogo size={32} />
      </button>
    </div>
    <div className="flex items-center pr-[23px]">
      <div className="flex items-center gap-2">
        <svg width="8" height="5" viewBox="0 0 8 5" className="mr-1"><path d="M0 5h8L4 0z" fill="#fff" /></svg>
        <Icon>
          <circle cx="8" cy="8" r="8" fill="#f6d91e" />
          <path d="M1 5A8 8 0 0 1 15 5Q8 0 1 5zM1 11a8 8 0 0 0 14 0q-7 5-14 0z" fill="#4cb82a" />
          <path d="M8 4v8M4 8h8" stroke="#0b6a20" strokeWidth="2.500" />
        </Icon>
        <Icon>
          <path d="M8 3h6v12H8zM10 1.500h2" stroke="#fff" strokeWidth="1.600" />
          <path d="M2 1v4M5 1v4M3.500 8v7" stroke="#fff" strokeWidth="1.300" /><path d="M1 4h5v4H1z" fill="#fff" />
        </Icon>
        <Icon><path d="M1 14v-2M4 14v-3M7 14V9M10 14V6M14 14V3" stroke="#fff" strokeWidth="2" /></Icon>
        <Icon>
          <path d="M2 6h2l4-4v12l-4-4H2z" stroke="#fff" strokeWidth="1.300" fill="#fff" />
          <path d="M11 5q3 3 0 6" stroke="#fff" strokeWidth="1.300" />
        </Icon>
      </div>
      <span className="ml-3.5 text-[13px]">ENG</span>
      <div className="ml-3.5 text-center leading-4">
        <div>19:38</div>
        <div>2014/8/26</div>
      </div>
    </div>
  </div>
);

const App: React.FC = () => {
  return (
    <div className="relative flex h-screen flex-col overflow-hidden font-['Open_Sans','Noto_Sans_CJK_SC',sans-serif] text-black">
      <TitleBar />
      <Ribbon />
      <SelectionBar />
      <Viewport />
      <StatusBar />
      <Taskbar />
      <Stamp />
    </div>
  );
};

export default App;
